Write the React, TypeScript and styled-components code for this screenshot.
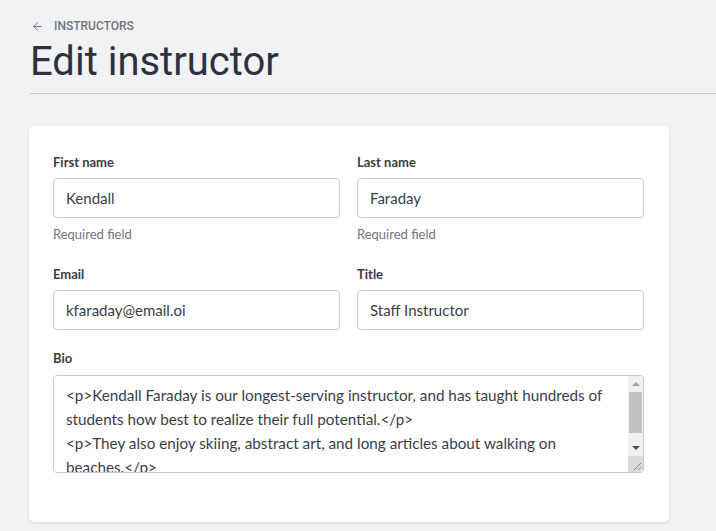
import styled, { createGlobalStyle } from 'styled-components';
import { ArrowLeft } from 'lucide-react';

const bio = `<p>Kendall Faraday is our longest-serving instructor, and has taught hundreds of students how best to realize their full potential.</p>
<p>They also enjoy skiing, abstract art, and long articles about walking on beaches.</p>`;

function App() {
  return (
    <>
      <GlobalStyle />
      <Page>
        <Header>
          <Crumb>
            <ArrowLeft size={13} strokeWidth={1.8} />
            <span>Instructors</span>
          </Crumb>
          <Heading>Edit instructor</Heading>
        </Header>
        <Main>
          <Card>
            <Form>
              <Field>
                <Label>First name</Label>
                <Input defaultValue="Kendall" />
                <Hint>Required field</Hint>
              </Field>
              <Field>
                <Label>Last name</Label>
                <Input defaultValue="Faraday" />
                <Hint>Required field</Hint>
              </Field>
              <Field>
                <Label>Email</Label>
                <Input defaultValue="kfaraday@email.oi" />
              </Field>
              <Field>
                <Label>Title</Label>
                <Input defaultValue="Staff Instructor" />
              </Field>
              <Field $wide>
                <Label>Bio</Label>
                <TextBox>
                  <TextArea defaultValue={bio} />
                  <ScrollBar>
                    <ScrollButton>
                      <Arrow $dir="up" />
                    </ScrollButton>
                    <Track>
                      <Thumb />
                    </Track>
                    <ScrollButton>
                      <Arrow $dir="down" />
                    </ScrollButton>
                    <Corner>
                      <svg width="8" height="8" viewBox="0 0 8 8">
                        <path d="M1 8 L8 1 M5 8 L8 5" stroke="#8c8c8c" strokeWidth="1" />
                      </svg>
                    </Corner>
                  </ScrollBar>
                </TextBox>
              </Field>
            </Form>
          </Card>
        </Main>
      </Page>
    </>
  );
}

const GlobalStyle = createGlobalStyle`
  body {
    margin: 0;
    background: #f1f2f4;
    font-family: Lato, "Liberation Sans", sans-serif;
  }
  * {
    box-sizing: border-box;
  }
`;

const Page = styled.div`
  min-height: 531px;
`;

const Header = styled.header`
  margin-left: 30px;
  padding-top: 18px;
  border-bottom: 1px solid #caccd1;
`;

const Crumb = styled.a`
  display: flex;
  align-items: center;
  gap: 10px;
  color: #6f7380;
  font-family: Roboto, sans-serif;
  font-size: 12px;
  font-weight: 500;
  text-transform: uppercase;
  line-height: 16px;

  svg {
    margin-left: 1px;
  }
`;

const Heading = styled.h1`
  margin: 4px 0 0;
  padding-bottom: 7px;
  color: #30313f;
  font-family: Roboto, sans-serif;
  font-size: 40px;
  font-weight: 400;
  line-height: 48px;
`;

const Main = styled.main`
  padding: 32px 0 0 29px;
`;

const Card = styled.section`
  width: 640px;
  padding: 27px 25px 49px 24px;
  background: #fff;
  border-radius: 5px;
  box-shadow: 0 1px 3px rgba(30, 35, 60, 0.14);
`;

const Form = styled.div`
  display: grid;
  grid-template-columns: 1fr 1fr;
  column-gap: 17px;
  row-gap: 19px;
`;

const Field = styled.div<{ $wide?: boolean }>`
  display: flex;
  flex-direction: column;
  grid-column: ${(p) => (p.$wide ? '1 / -1' : 'auto')};
`;

const Label = styled.label`
  margin-bottom: 7px;
  color: #3b3d45;
  font-size: 13px;
  font-weight: 700;
  line-height: 18px;
`;

const Input = styled.input`
  height: 40px;
  padding: 0 12px;
  border: 1px solid #c9cad4;
  border-radius: 4px;
  color: #3a3d4a;
  font-family: inherit;
  font-size: 15px;
  outline: none;
`;

const Hint = styled.span`
  margin: 8px 0 4px;
  color: #72757f;
  font-size: 13px;
  line-height: 16px;
`;

const TextBox = styled.div`
  position: relative;
  display: flex;
  margin-top: 1px;
`;

const TextArea = styled.textarea`
  flex: 1;
  height: 98px;
  padding: 7px 27px 7px 12px;
  border: 1px solid #c9cad4;
  border-radius: 4px;
  color: #3a3d4a;
  font-family: inherit;
  font-size: 15.25px;
  line-height: 24px;
  outline: none;
  resize: none;
  scrollbar-width: none;
`;

const ScrollBar = styled.div`
  position: absolute;
  top: 1px;
  right: 1px;
  bottom: 1px;
  width: 15px;
  display: flex;
  flex-direction: column;
  background: #f1f1f1;
  border-radius: 0 3px 3px 0;
  overflow: hidden;
`;

const ScrollButton = styled.div`
  height: 16px;
  display: flex;
  align-items: center;
  justify-content: center;
`;

const Arrow = styled.span<{ $dir: 'up' | 'down' }>`
  width: 0;
  height: 0;
  border-left: 4px solid transparent;
  border-right: 4px solid transparent;
  ${(p) =>
    p.$dir === 'up'
      ? 'border-bottom: 4px solid #a3a3a3;'
      : 'border-top: 4px solid #505050;'}
`;

const Track = styled.div`
  flex: 1;
  padding: 0 1px;
`;

const Thumb = styled.div`
  height: 41px;
  background: #c1c1c1;
`;

const Corner = styled.div`
  height: 16px;
  display: flex;
  align-items: flex-end;
  justify-content: flex-end;
  padding: 0 2px 2px 0;
  background: #dcdcdc;
`;

export default App;
